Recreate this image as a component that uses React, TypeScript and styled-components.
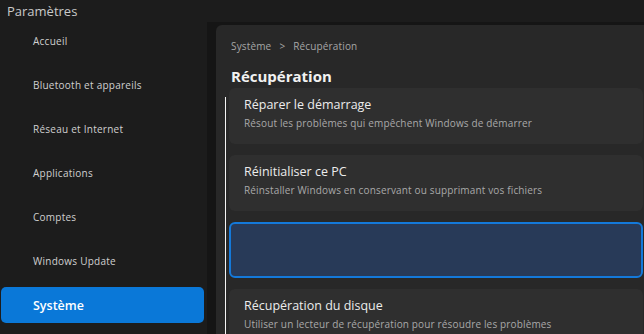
import React from 'react';
import styled, { createGlobalStyle } from 'styled-components';

const GlobalStyle = createGlobalStyle`
    html, body {
        margin: 0;
        padding: 0;
        background: #1c1c1c;
    }
    body {
        font-family: 'Open Sans', 'Noto Sans', sans-serif;
        -webkit-font-smoothing: antialiased;
    }
`;

const Window = styled.div`
    display: flex;
    width: 644px;
    height: 334px;
    overflow: hidden;
    background: #1c1c1c;
`;

const Sidebar = styled.nav`
    width: 207px;
    flex-shrink: 0;
    display: flex;
    flex-direction: column;
`;

const AppTitle = styled.div`
    height: 23px;
    padding-left: 7px;
    font-size: 13px;
    line-height: 23px;
    color: #c9c9c9;
`;

const NavList = styled.div`
    display: flex;
    flex-direction: column;
    gap: 8px;
`;

const NavItem = styled.div<{ active?: boolean }>`
    height: 36px;
    margin: 0 3px 0 1px;
    padding-left: 32px;
    display: flex;
    align-items: center;
    border-radius: 5px;
    background: ${(p) => (p.active ? '#0a78d8' : 'transparent')};
    color: ${(p) => (p.active ? '#ffffff' : '#d0d0d0')};
    font-size: ${(p) => (p.active ? '12.5px' : '10px')};
    font-weight: ${(p) => (p.active ? 600 : 400)};
    letter-spacing: ${(p) => (p.active ? '0' : '0.25px')};
`;

const Right = styled.div`
    flex: 1;
    display: flex;
    flex-direction: column;
    padding-top: 22px;
`;

const Frame = styled.div`
    flex: 1;
    display: flex;
    background: #151515;
    padding: 3px 0 0 9px;
`;

const Panel = styled.main`
    flex: 1;
    background: #282828;
    border-radius: 6px 0 0 0;
    padding: 14px 0 0 13px;
    display: flex;
    flex-direction: column;
`;

const Breadcrumb = styled.div`
    padding-left: 2px;
    font-size: 10px;
    line-height: 14px;
    letter-spacing: 0.15px;
    color: #a6a6a6;
    display: flex;
    gap: 8px;
`;

const Heading = styled.h1`
    margin: 13px 0 2px;
    padding-left: 2px;
    font-size: 15px;
    line-height: 20px;
    font-weight: 700;
    color: #f2f2f2;
`;

const Body = styled.div`
    flex: 1;
    display: flex;
    gap: 3px;
    margin-left: -4px;
`;

const Rail = styled.div`
    width: 1px;
    margin-top: 9px;
    background: #f4f4f4;
    flex-shrink: 0;
`;

const CardList = styled.div`
    flex: 1;
    display: flex;
    flex-direction: column;
    gap: 11px;
`;

const Card = styled.div<{ selected?: boolean }>`
    height: 56px;
    box-sizing: border-box;
    margin-right: 1px;
    padding: ${(p) => (p.selected ? '7px 0 0 13px' : '9px 0 0 15px')};
    border-radius: 6px;
    background: ${(p) => (p.selected ? '#283a58' : '#2f2f2f')};
    border: ${(p) => (p.selected ? '2px solid #1479da' : 'none')};
    flex-shrink: 0;
`;

const CardTitle = styled.div`
    font-size: 12.5px;
    line-height: 16px;
    color: #ececec;
`;

const CardText = styled.div`
    margin-top: 4px;
    font-size: 10px;
    line-height: 12px;
    letter-spacing: 0.15px;
    color: #a9a9a9;
`;

const navItems = [
    'Accueil',
    'Bluetooth et appareils',
    'Réseau et Internet',
    'Applications',
    'Comptes',
    'Windows Update',
    'Système',
];

const cards = [
    { title: 'Réparer le démarrage', text: 'Résout les problèmes qui empêchent Windows de démarrer' },
    { title: 'Réinitialiser ce PC', text: 'Réinstaller Windows en conservant ou supprimant vos fichiers' },
    { selected: true },
    { title: 'Récupération du disque', text: 'Utiliser un lecteur de récupération pour résoudre les problèmes' },
];

export default function App() {
    return (
        <>
            <GlobalStyle />
            <Window>
                <Sidebar>
                    <AppTitle>Paramètres</AppTitle>
                    <NavList>
                        {navItems.map((label) => (
                            <NavItem key={label} active={label === 'Système'}>
                                {label}
                            </NavItem>
                        ))}
                    </NavList>
                </Sidebar>
                <Right>
                    <Frame>
                        <Panel>
                            <Breadcrumb>
                                <span>Système</span>
                                <span>&gt;</span>
                                <span>Récupération</span>
                            </Breadcrumb>
                            <Heading>Récupération</Heading>
                            <Body>
                                <Rail />
                                <CardList>
                                    {cards.map((c, i) => (
                                        <Card key={i} selected={c.selected}>
                                            {c.title && <CardTitle>{c.title}</CardTitle>}
                                            {c.text && <CardText>{c.text}</CardText>}
                                        </Card>
                                    ))}
                                </CardList>
                            </Body>
                        </Panel>
                    </Frame>
                </Right>
            </Window>
        </>
    );
}
